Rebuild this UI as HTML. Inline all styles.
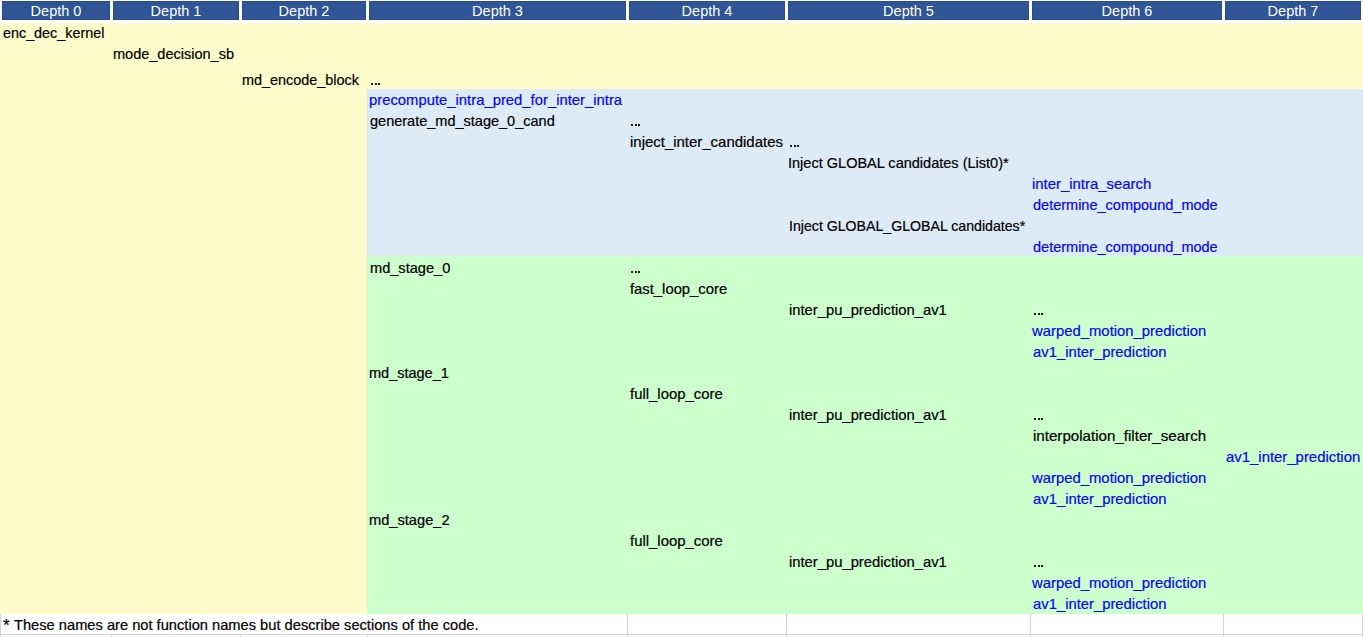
<!DOCTYPE html>
<html><head><meta charset="utf-8"><style>
html,body{margin:0;padding:0;background:#fff;}
body{width:1363px;height:637px;position:relative;overflow:hidden;font-family:"Liberation Sans",sans-serif;}
.r{position:absolute;}
.h{position:absolute;top:1px;height:19px;background:#2F5597;box-shadow:inset 0 0 0 1px #284C8E;color:#fff;text-align:center;font-size:14.5px;line-height:21px;}
.t{position:absolute;white-space:pre;font-size:14.5px;line-height:20px;height:20px;color:#000;transform-origin:0 0;-webkit-text-stroke:0.2px #000;}
.b{color:#0606F0;-webkit-text-stroke-color:#0606F0;}
.g{position:absolute;background:#D4D4D4;}
</style></head><body>

<div class="r" style="left:0;top:23px;width:1363px;height:66px;background:#FFFCCC"></div>
<div class="r" style="left:0;top:89px;width:367px;height:525px;background:#FFFCCC"></div>
<div class="r" style="left:367px;top:89px;width:996px;height:167px;background:#DDEBF7"></div>
<div class="r" style="left:367px;top:256px;width:996px;height:358px;background:#CCFFCC"></div>
<div class="g" style="left:0;top:614px;width:1px;height:23px"></div>
<div class="g" style="left:627px;top:614px;width:1px;height:23px"></div>
<div class="g" style="left:786px;top:614px;width:1px;height:23px"></div>
<div class="g" style="left:1030px;top:614px;width:1px;height:23px"></div>
<div class="g" style="left:1223px;top:614px;width:1px;height:23px"></div>
<div class="g" style="left:1362px;top:614px;width:1px;height:23px"></div>
<div class="g" style="left:111px;top:634px;width:1px;height:3px"></div>
<div class="g" style="left:240px;top:634px;width:1px;height:3px"></div>
<div class="g" style="left:367px;top:634px;width:1px;height:3px"></div>
<div class="g" style="left:0;top:634px;width:1363px;height:1px"></div>
<div class="h" style="left:2px;width:108px">Depth 0</div>
<div class="h" style="left:113px;width:126px">Depth 1</div>
<div class="h" style="left:242px;width:124px">Depth 2</div>
<div class="h" style="left:369px;width:257px">Depth 3</div>
<div class="h" style="left:629px;width:156px">Depth 4</div>
<div class="h" style="left:788px;width:241px">Depth 5</div>
<div class="h" style="left:1032px;width:190px">Depth 6</div>
<div class="h" style="left:1225px;width:136px">Depth 7</div>
<div class="t" style="left:2.9316839455112387px;top:23px;transform:scaleX(0.9898);">enc_dec_kernel</div>
<div class="t" style="left:113.32123112860262px;top:44px;transform:scaleX(1.0008);">mode_decision_sb</div>
<div class="t" style="left:242.3023431077947px;top:70px;transform:scaleX(0.9942);">md_encode_block</div>
<div class="r" style="left:371px;top:83px;width:2px;height:2px;background:#1a1a1a"></div>
<div class="r" style="left:374.5px;top:83px;width:2px;height:2px;background:#1a1a1a"></div>
<div class="r" style="left:378px;top:83px;width:2px;height:2px;background:#1a1a1a"></div>
<div class="t b" style="left:369.3337488295188px;top:90px;transform:scaleX(1.0228);">precompute_intra_pred_for_inter_intra</div>
<div class="t" style="left:369.6823778581922px;top:111px;transform:scaleX(1.0005);">generate_md_stage_0_cand</div>
<div class="r" style="left:631px;top:124px;width:2px;height:2px;background:#1a1a1a"></div>
<div class="r" style="left:634.5px;top:124px;width:2px;height:2px;background:#1a1a1a"></div>
<div class="r" style="left:638px;top:124px;width:2px;height:2px;background:#1a1a1a"></div>
<div class="t" style="left:629.5609345430403px;top:132px;transform:scaleX(1.0312);">inject_inter_candidates</div>
<div class="r" style="left:790px;top:145px;width:2px;height:2px;background:#1a1a1a"></div>
<div class="r" style="left:793.5px;top:145px;width:2px;height:2px;background:#1a1a1a"></div>
<div class="r" style="left:797px;top:145px;width:2px;height:2px;background:#1a1a1a"></div>
<div class="t" style="left:788.4448375443329px;top:153px;transform:scaleX(1.0017);">Inject GLOBAL candidates (List0)*</div>
<div class="t b" style="left:1032.3157119831235px;top:174px;transform:scaleX(1.0274);">inter_intra_search</div>
<div class="t b" style="left:1033.0305601617727px;top:195px;transform:scaleX(1.0005);">determine_compound_mode</div>
<div class="t" style="left:788.542111210432px;top:216px;transform:scaleX(0.9757);">Inject GLOBAL_GLOBAL candidates*</div>
<div class="t b" style="left:1033.0305601617727px;top:237px;transform:scaleX(1.0005);">determine_compound_mode</div>
<div class="t" style="left:369.5760662478165px;top:258px;transform:scaleX(1.0057);">md_stage_0</div>
<div class="r" style="left:631px;top:271px;width:2px;height:2px;background:#1a1a1a"></div>
<div class="r" style="left:634.5px;top:271px;width:2px;height:2px;background:#1a1a1a"></div>
<div class="r" style="left:638px;top:271px;width:2px;height:2px;background:#1a1a1a"></div>
<div class="t" style="left:629.8392231726854px;top:279px;transform:scaleX(1.0213);">fast_loop_core</div>
<div class="t" style="left:788.6877671928568px;top:300px;transform:scaleX(1.0196);">inter_pu_prediction_av1</div>
<div class="r" style="left:1034px;top:313px;width:2px;height:2px;background:#1a1a1a"></div>
<div class="r" style="left:1037.5px;top:313px;width:2px;height:2px;background:#1a1a1a"></div>
<div class="r" style="left:1041px;top:313px;width:2px;height:2px;background:#1a1a1a"></div>
<div class="t b" style="left:1032.3785152089272px;top:321px;transform:scaleX(1.0247);">warped_motion_prediction</div>
<div class="t b" style="left:1033.2797507497962px;top:342px;transform:scaleX(1.0219);">av1_inter_prediction</div>
<div class="t" style="left:369.31447668390865px;top:363px;transform:scaleX(0.9998);">md_stage_1</div>
<div class="t" style="left:629.9578873192993px;top:384px;transform:scaleX(1.0271);">full_loop_core</div>
<div class="t" style="left:788.6877671928568px;top:405px;transform:scaleX(1.0196);">inter_pu_prediction_av1</div>
<div class="r" style="left:1034px;top:418px;width:2px;height:2px;background:#1a1a1a"></div>
<div class="r" style="left:1037.5px;top:418px;width:2px;height:2px;background:#1a1a1a"></div>
<div class="r" style="left:1041px;top:418px;width:2px;height:2px;background:#1a1a1a"></div>
<div class="t" style="left:1032.688028125947px;top:426px;transform:scaleX(1.0425);">interpolation_filter_search</div>
<div class="t b" style="left:1226.0386035162326px;top:447px;transform:scaleX(1.0281);">av1_inter_prediction</div>
<div class="t b" style="left:1032.3785152089272px;top:468px;transform:scaleX(1.0247);">warped_motion_prediction</div>
<div class="t b" style="left:1033.2797507497962px;top:489px;transform:scaleX(1.0219);">av1_inter_prediction</div>
<div class="t" style="left:369.211076321768px;top:510px;transform:scaleX(1.0096);">md_stage_2</div>
<div class="t" style="left:629.9578873192993px;top:531px;transform:scaleX(1.0271);">full_loop_core</div>
<div class="t" style="left:788.6877671928568px;top:552px;transform:scaleX(1.0196);">inter_pu_prediction_av1</div>
<div class="r" style="left:1034px;top:565px;width:2px;height:2px;background:#1a1a1a"></div>
<div class="r" style="left:1037.5px;top:565px;width:2px;height:2px;background:#1a1a1a"></div>
<div class="r" style="left:1041px;top:565px;width:2px;height:2px;background:#1a1a1a"></div>
<div class="t b" style="left:1032.3785152089272px;top:573px;transform:scaleX(1.0247);">warped_motion_prediction</div>
<div class="t b" style="left:1033.2797507497962px;top:594px;transform:scaleX(1.0219);">av1_inter_prediction</div>
<div class="t" style="left:14.200946262761436px;top:615px;transform:scaleX(1.0111);">These names are not function names but describe sections of the code.</div>
<div class="t" style="left:3px;top:616px;font-size:17px;line-height:20px">*</div>
</body></html>
